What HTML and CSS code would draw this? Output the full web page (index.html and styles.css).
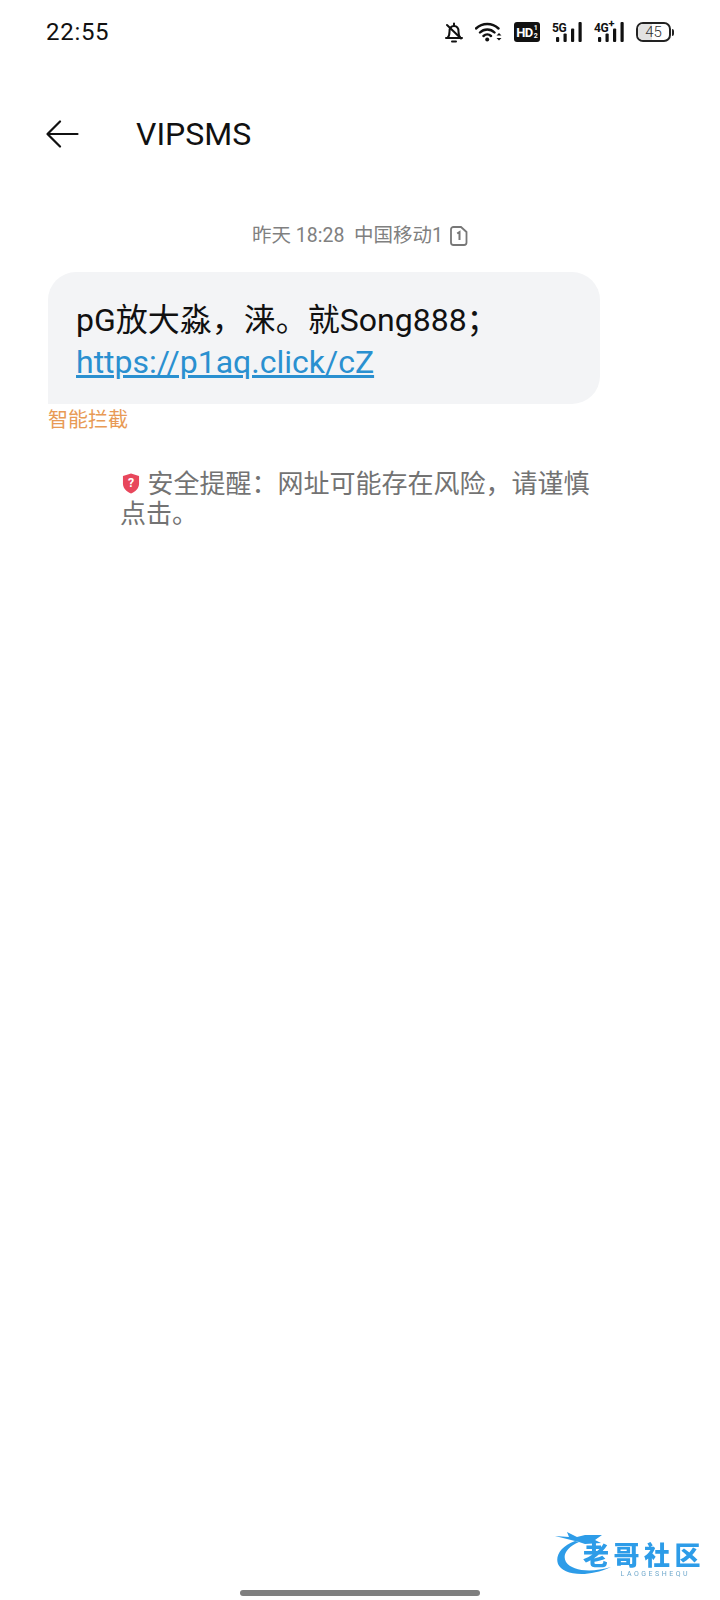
FILE: index.html
```html
<!DOCTYPE html>
<html>
<head>
    <meta charset="UTF-8">
    <meta name="viewport" content="width=device-width, initial-scale=1">
    <title>VIPSMS</title>
    <link rel="stylesheet" href="styles.css">
</head>
<body>
    <div id="tela">
        <!-- Barra de status -->
        <div class="status-bar">
            <span class="hora">22:55</span>
            <div class="status-icones">
                <svg class="ic-sino" width="18" height="21" viewBox="0 0 18 21" fill="none" stroke="#111" stroke-width="2" stroke-linecap="round" stroke-linejoin="round">
                    <path d="M1 16h16M2.500 16c1.500-1.500 2-3.500 2-6.500 0-3.500 2-5.500 4.500-5.500s4.500 2 4.500 5.500c0 3 .5 5 2 6.500"/>
                    <path d="M2 3l14 13.500"/>
                    <path d="M9 1.500v2M7 19.500h4"/>
                </svg>
                <svg class="ic-wifi" width="27" height="20" viewBox="0 0 27 20" fill="none">
                    <path d="M1 6.500c6.500-6 16-6 22.500 0M5 10.500c4-4 10.500-4 14.500 0M8.500 14c2.200-2 5.300-2 7.500 0" stroke="#111" stroke-width="2.400" stroke-linecap="round"/>
                    <circle cx="12.200" cy="17.500" r="2" fill="#111"/>
                    <path d="M21.500 13.500l2.500-2.500 2.500 2.500zM21.500 16l2.500 2.500 2.500-2.500z" fill="#111"/>
                </svg>
                <div class="ic-hd"><b>HD</b><span class="hd-num">1<br>2</span></div>
                <div class="sinal">
                    <span class="sinal-rede">5G</span>
                    <svg width="26" height="20" viewBox="0 0 26 20" fill="#111">
                        <rect x="0" y="15" width="3.200" height="5" rx="1"/>
                        <rect x="7.500" y="11.500" width="3.200" height="8.500" rx="1"/>
                        <rect x="15" y="6.500" width="3.200" height="13.500" rx="1"/>
                        <rect x="22.500" y="0" width="3.200" height="20" rx="1"/>
                    </svg>
                </div>
                <div class="sinal">
                    <span class="sinal-rede">4G<sup>+</sup></span>
                    <svg width="26" height="20" viewBox="0 0 26 20" fill="#111">
                        <rect x="0" y="15" width="3.200" height="5" rx="1"/>
                        <rect x="7.500" y="11.500" width="3.200" height="8.500" rx="1"/>
                        <rect x="15" y="6.500" width="3.200" height="13.500" rx="1"/>
                        <rect x="22.500" y="0" width="3.200" height="20" rx="1"/>
                    </svg>
                </div>
                <div class="bateria">
                    <div class="bateria-corpo"><span class="bateria-nivel"></span><span class="bateria-num">45</span></div>
                    <span class="bateria-polo"></span>
                </div>
            </div>
        </div>

        <!-- Cabeçalho -->
        <div class="cabecalho">
            <svg width="33" height="28" viewBox="0 0 33 28" fill="none" stroke="#111" stroke-width="2.200" stroke-linecap="round" stroke-linejoin="round">
                <path d="M1.500 14h30M14 1.500L1.500 14 14 26.500"/>
            </svg>
            <h1 class="titulo">VIPSMS</h1>
        </div>

        <!-- Mensagem -->
        <div class="conversa">
            <div class="data-msg">
                <span>昨天 18:28&nbsp; 中国移动1</span>
                <svg width="18" height="20" viewBox="0 0 18 20" fill="none">
                    <path d="M3.500 1h7.500l5.500 5v10.500a2.500 2.500 0 0 1-2.500 2.500h-10.500a2.500 2.500 0 0 1-2.500-2.500v-13a2.500 2.500 0 0 1 2.500-2.500z" stroke="#777" stroke-width="1.800"/>
                    <path d="M7.200 7.500l2.300-1.500v8" stroke="#777" stroke-width="2"/>
                </svg>
            </div>
            <div class="balao">
                <p>pG放大淼，涞。就Song888；<br><a href="#">https://p1aq.click/cZ</a></p>
            </div>
            <div class="etiqueta">智能拦截</div>
            <div class="aviso">
                <svg width="18" height="21" viewBox="0 0 19 22">
                    <path d="M9.500 .5l8.500 2.500v8c0 5-3.500 8.500-8.500 10.500-5-2-8.500-5.500-8.500-10.500v-8z" fill="#e8475c"/>
                    <text x="9.500" y="15" class="aviso-q">?</text>
                </svg>
                安全提醒：网址可能存在风险，请谨慎点击。
            </div>
        </div>

        <!-- Rodapé com marca d'água -->
        <div class="rodape">
            <div class="marca">
                <svg class="marca-arco" width="80" height="46" viewBox="0 0 80 46" fill="#2d9ce8">
                    <path d="M20 9C6 14 0 24 3 32c4 10 27 15 53 3-20 6-39 4-45-5-4-7 1-15 13-20z"/>
                    <path d="M0 4l14 1-2-5 10 5 8-2h17l-7 5 6 3-16 1-6-2-4-1-8-2z"/>
                </svg>
                <div class="marca-texto">
                    <span class="marca-nome">老哥社区</span>
                    <span class="marca-sub">LAOGESHEQU</span>
                </div>
            </div>
            <div class="barra-home"></div>
        </div>
    </div>
</body>
</html>
```

FILE: styles.css
```css
/* Estilos gerais */
body {
    margin: 0;
    padding: 0;
    background: #fff;
    font-family: "Roboto", "Noto Sans CJK SC", sans-serif;
}

#tela {
    width: 720px;
    height: 1600px;
    display: flex;
    flex-direction: column;
    overflow: hidden;
}

/* Barra de status */
.status-bar {
    display: flex;
    align-items: center;
    justify-content: space-between;
    height: 32px;
    padding: 16px 46px 0 46px;
}

.hora {
    font-size: 24px;
    letter-spacing: 0.7px;
    color: #111;
}

.status-icones {
    display: flex;
    align-items: center;
    gap: 12px;
}

.ic-hd {
    display: flex;
    align-items: center;
    justify-content: center;
    gap: 1px;
    width: 26px;
    height: 20px;
    background: #111;
    border-radius: 3px;
    color: #fff;
}

.ic-hd b {
    font-size: 13px;
    letter-spacing: -0.5px;
}

.hd-num {
    font-size: 7px;
    font-weight: 700;
    line-height: 8px;
}

.sinal {
    display: flex;
    align-items: flex-end;
    height: 20px;
}

.sinal svg {
    margin-left: 4px;
}

.sinal-rede {
    position: relative;
    width: 0;
    align-self: flex-start;
    font-size: 12px;
    font-weight: 700;
    line-height: 12px;
    letter-spacing: -0.3px;
    color: #111;
}

.sinal-rede sup {
    font-size: 11px;
    line-height: 0;
}

.bateria {
    display: flex;
    align-items: center;
    gap: 1px;
}

.bateria-corpo {
    position: relative;
    display: flex;
    align-items: center;
    justify-content: center;
    width: 31px;
    height: 16px;
    border: 2px solid #222;
    border-radius: 7px;
    overflow: hidden;
}

.bateria-nivel {
    position: absolute;
    left: 0;
    top: 0;
    bottom: 0;
    width: 45%;
    background: #e2e2e2;
}

.bateria-num {
    position: relative;
    font-size: 15px;
    font-weight: 300;
    color: #333;
}

.bateria-polo {
    width: 2px;
    height: 7px;
    background: #222;
    border-radius: 0 2px 2px 0;
}

/* Cabeçalho */
.cabecalho {
    display: flex;
    align-items: center;
    gap: 57px;
    margin-top: 64px;
    padding-left: 46px;
    height: 44px;
}

.titulo {
    margin: 0;
    font-size: 32px;
    font-weight: 400;
    color: #111;
}

/* Conversa */
.conversa {
    display: flex;
    flex-direction: column;
    padding: 0 48px;
}

.data-msg {
    display: flex;
    align-items: center;
    justify-content: center;
    gap: 7px;
    margin-top: 67px;
    font-size: 19.5px;
    line-height: 26px;
    color: #808080;
}

.balao {
    width: 552px;
    height: 132px;
    box-sizing: border-box;
    margin-top: 23px;
    padding: 27px 28px 0;
    background: #f3f4f6;
    border-radius: 28px 28px 28px 0;
}

.balao p {
    margin: 0;
    font-size: 32px;
    line-height: 42px;
    color: #111;
}

.balao a {
    color: #2a90d0;
}

.etiqueta {
    margin-top: 3px;
    font-size: 20px;
    line-height: 26px;
    color: #e89a55;
}

.aviso {
    width: 478px;
    margin: 36px 0 0 72px;
    font-size: 26px;
    line-height: 30px;
    color: #737373;
}

.aviso svg {
    vertical-align: -1px;
    margin: 0 1px 0 2px;
}

.aviso-q {
    font-size: 13px;
    font-weight: 700;
    fill: #fff;
    text-anchor: middle;
}

/* Rodapé */
.rodape {
    margin-top: auto;
    display: flex;
    flex-direction: column;
}

.marca {
    display: flex;
    align-items: flex-start;
    align-self: flex-end;
    height: 58px;
    margin-right: 17px;
    filter: blur(0.4px);
}

.marca-texto {
    display: flex;
    flex-direction: column;
    width: 120px;
    margin: 11px 0 0 -52px;
}

.marca-nome {
    font-size: 26px;
    font-weight: 900;
    line-height: 27px;
    letter-spacing: 4.5px;
    white-space: nowrap;
    color: #2d9ce8;
}

.marca-sub {
    align-self: flex-end;
    margin-right: 13px;
    font-size: 7px;
    line-height: 8px;
    letter-spacing: 2.5px;
    color: #6fa8cc;
}

.barra-home {
    align-self: center;
    width: 240px;
    height: 6px;
    margin-bottom: 4px;
    background: #7f7f7f;
    border-radius: 3px;
}
```
